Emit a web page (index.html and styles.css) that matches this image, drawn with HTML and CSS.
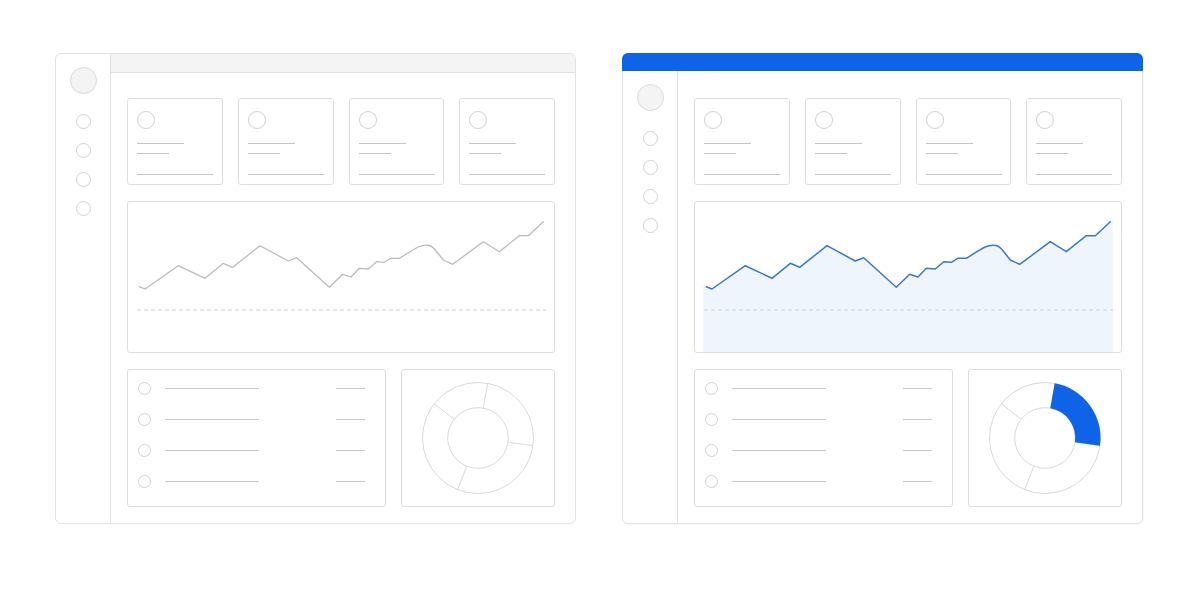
FILE: index.html
```html
<!DOCTYPE html>
<html>
<head>
<meta charset="utf-8">
<title>Dashboard wireframes</title>
<link rel="stylesheet" href="styles.css">
</head>
<body>
<div class="stage">
  <!-- Left window -->
  <div class="win">
    <div class="win-body">
      <aside class="sidebar">
        <span class="avatar"></span>
        <span class="nav-dot"></span>
        <span class="nav-dot"></span>
        <span class="nav-dot"></span>
        <span class="nav-dot"></span>
      </aside>
      <div class="main">
        <div class="topbar"></div>
        <div class="content">
          <div class="stats">
            <div class="card"><span class="card-icon"></span><span class="ln ln-a"></span><span class="ln ln-b"></span><span class="ln ln-c"></span></div>
            <div class="card"><span class="card-icon"></span><span class="ln ln-a"></span><span class="ln ln-b"></span><span class="ln ln-c"></span></div>
            <div class="card"><span class="card-icon"></span><span class="ln ln-a"></span><span class="ln ln-b"></span><span class="ln ln-c"></span></div>
            <div class="card"><span class="card-icon"></span><span class="ln ln-a"></span><span class="ln ln-b"></span><span class="ln ln-c"></span></div>
          </div>
          <div class="chart">
            <svg class="chart-svg" width="426" height="150" viewBox="0 0 426 150">
              <line class="baseline" x1="9" y1="108" x2="418" y2="108"/>
              <path class="trend" d="M11.3 84.7 L17 87 L50.3 63.7 L77 76.3 L95.3 61.3 L104.7 65.3 L132 43.7 L160.3 59 L168.7 55.7 L201.3 85.3 L214.7 72.3 L223 75 L231.3 66.3 L240.3 67 L248.7 59.7 L256.3 60.3 L262.7 56.3 L271.3 56.3 L282 49.7 L290 45 Q296 42.5 301 43.5 Q305 44.5 309 50 L315.3 58 L324.7 62.3 L355.3 39.7 L371.3 49.7 L391.3 33.7 L400.3 33.7 L415.3 19.7"/>
            </svg>
          </div>
          <div class="bottom">
            <div class="list">
              <div class="row"><span class="row-dot"></span><span class="row-line"></span><span class="row-val"></span></div>
              <div class="row"><span class="row-dot"></span><span class="row-line"></span><span class="row-val"></span></div>
              <div class="row"><span class="row-dot"></span><span class="row-line"></span><span class="row-val"></span></div>
              <div class="row"><span class="row-dot"></span><span class="row-line"></span><span class="row-val"></span></div>
            </div>
            <div class="donut">
              <svg width="152" height="136" viewBox="-76 -68 152 136">
                <circle class="ring" cx="0" cy="0" r="55.5"/>
                <circle class="ring" cx="0" cy="0" r="30.3"/>
                <line class="ring" x1="9.64" y1="-54.66" x2="5.26" y2="-29.84"/>
                <line class="ring" x1="54.96" y1="7.72" x2="30" y2="4.22"/>
                <line class="ring" x1="-20.43" y1="51.6" x2="-11.15" y2="28.17"/>
                <line class="ring" x1="-43.73" y1="-34.17" x2="-23.88" y2="-18.66"/>
              </svg>
            </div>
          </div>
        </div>
      </div>
    </div>
  </div>

  <!-- Right window -->
  <div class="win win--active">
    <div class="header"></div>
    <div class="win-body">
      <aside class="sidebar">
        <span class="avatar"></span>
        <span class="nav-dot"></span>
        <span class="nav-dot"></span>
        <span class="nav-dot"></span>
        <span class="nav-dot"></span>
      </aside>
      <div class="main">
        <div class="content">
          <div class="stats">
            <div class="card"><span class="card-icon"></span><span class="ln ln-a"></span><span class="ln ln-b"></span><span class="ln ln-c"></span></div>
            <div class="card"><span class="card-icon"></span><span class="ln ln-a"></span><span class="ln ln-b"></span><span class="ln ln-c"></span></div>
            <div class="card"><span class="card-icon"></span><span class="ln ln-a"></span><span class="ln ln-b"></span><span class="ln ln-c"></span></div>
            <div class="card"><span class="card-icon"></span><span class="ln ln-a"></span><span class="ln ln-b"></span><span class="ln ln-c"></span></div>
          </div>
          <div class="chart">
            <svg class="chart-svg" width="426" height="150" viewBox="0 0 426 150">
              <path class="area" d="M8 84.5 L11.3 84.7 L17 87 L50.3 63.7 L77 76.3 L95.3 61.3 L104.7 65.3 L132 43.7 L160.3 59 L168.7 55.7 L201.3 85.3 L214.7 72.3 L223 75 L231.3 66.3 L240.3 67 L248.7 59.7 L256.3 60.3 L262.7 56.3 L271.3 56.3 L282 49.7 L290 45 Q296 42.5 301 43.5 Q305 44.5 309 50 L315.3 58 L324.7 62.3 L355.3 39.7 L371.3 49.7 L391.3 33.7 L400.3 33.7 L415.3 19.7 L418 18 L418 150 L8 150 Z"/>
              <line class="baseline baseline--blue" x1="9" y1="108" x2="418" y2="108"/>
              <path class="trend trend--blue" d="M11.3 84.7 L17 87 L50.3 63.7 L77 76.3 L95.3 61.3 L104.7 65.3 L132 43.7 L160.3 59 L168.7 55.7 L201.3 85.3 L214.7 72.3 L223 75 L231.3 66.3 L240.3 67 L248.7 59.7 L256.3 60.3 L262.7 56.3 L271.3 56.3 L282 49.7 L290 45 Q296 42.5 301 43.5 Q305 44.5 309 50 L315.3 58 L324.7 62.3 L355.3 39.7 L371.3 49.7 L391.3 33.7 L400.3 33.7 L415.3 19.7"/>
            </svg>
          </div>
          <div class="bottom">
            <div class="list">
              <div class="row"><span class="row-dot"></span><span class="row-line"></span><span class="row-val"></span></div>
              <div class="row"><span class="row-dot"></span><span class="row-line"></span><span class="row-val"></span></div>
              <div class="row"><span class="row-dot"></span><span class="row-line"></span><span class="row-val"></span></div>
              <div class="row"><span class="row-dot"></span><span class="row-line"></span><span class="row-val"></span></div>
            </div>
            <div class="donut">
              <svg width="152" height="136" viewBox="-76 -68 152 136">
                <circle class="ring" cx="0" cy="0" r="55.5"/>
                <circle class="ring" cx="0" cy="0" r="30.3"/>
                <line class="ring" x1="54.96" y1="7.72" x2="30" y2="4.22"/>
                <line class="ring" x1="-20.43" y1="51.6" x2="-11.15" y2="28.17"/>
                <line class="ring" x1="-43.73" y1="-34.17" x2="-23.88" y2="-18.66"/>
                <path class="slice" d="M9.64 -54.66 A55.5 55.5 0 0 1 54.96 7.72 L30 4.22 A30.3 30.3 0 0 0 5.26 -29.84 Z"/>
              </svg>
            </div>
          </div>
        </div>
      </div>
    </div>
  </div>
</div>
</body>
</html>
```

FILE: styles.css
```css
html, body {
  margin: 0;
  padding: 0;
  background: #ffffff;
  font-family: "Liberation Sans", Arial, sans-serif;
}

.stage {
  width: 1200px;
  height: 600px;
  box-sizing: border-box;
  padding: 53px 0 0 55px;
  display: flex;
  gap: 46px;
  align-items: flex-start;
}

.win {
  width: 521px;
  height: 471px;
  box-sizing: border-box;
  border: 1px solid #e2e2e2;
  border-radius: 6px;
  display: flex;
  flex-direction: column;
  background: #fff;
}

.win--active {
  box-shadow: 1px 1px 1px rgba(0, 0, 0, 0.04);
}

.header {
  height: 18px;
  margin: -1px -1px 0 -1px;
  background: #0e63e6;
  border-radius: 6px 6px 0 0;
  flex: none;
}

.win-body {
  flex: 1;
  display: flex;
  min-height: 0;
}

.sidebar {
  width: 55px;
  box-sizing: border-box;
  border-right: 1px solid #e2e2e2;
  padding-top: 13px;
  display: flex;
  flex-direction: column;
  align-items: center;
  gap: 14px;
  flex: none;
}

.avatar {
  width: 27px;
  height: 27px;
  box-sizing: border-box;
  border: 1px solid #d9d9d9;
  background: #f4f4f4;
  border-radius: 50%;
  margin-bottom: 6px;
}

.nav-dot {
  width: 15px;
  height: 15px;
  box-sizing: border-box;
  border: 1px solid #d2d2d2;
  border-radius: 50%;
}

.main {
  flex: 1;
  display: flex;
  flex-direction: column;
  min-width: 0;
}

.topbar {
  height: 18px;
  background: #f4f4f4;
  border-bottom: 1px solid #e2e2e2;
  border-top-right-radius: 5px;
  flex: none;
}

.content {
  padding: 25px 20px 0 16px;
  display: flex;
  flex-direction: column;
  gap: 16px;
}

.win--active .content {
  padding-top: 27px;
}

.stats {
  display: grid;
  grid-template-columns: repeat(4, minmax(0, 1fr));
  gap: 15px;
}

.card {
  height: 87px;
  box-sizing: border-box;
  border: 1px solid #dedede;
  border-radius: 3px;
  padding: 12px 9px 0 9px;
  display: flex;
  flex-direction: column;
  align-items: flex-start;
}

.card-icon {
  width: 18px;
  height: 18px;
  box-sizing: border-box;
  border: 1px solid #cfcfcf;
  border-radius: 50%;
}

.ln {
  display: block;
  height: 1px;
  background: #c4c4c4;
}

.ln-a { width: 47px; margin-top: 14px; }
.ln-b { width: 32px; margin-top: 9px; }
.ln-c { width: 76px; margin-top: 20px; }

.chart {
  height: 152px;
  box-sizing: border-box;
  border: 1px solid #dedede;
  border-radius: 3px;
  overflow: hidden;
}

.chart-svg {
  display: block;
}

.baseline {
  stroke: #cfcfcf;
  stroke-width: 1;
  stroke-dasharray: 4 3;
}

.baseline--blue {
  stroke: #c9d3e0;
}

.trend {
  fill: none;
  stroke: #bcbcbc;
  stroke-width: 1.3;
  stroke-linejoin: round;
  stroke-linecap: round;
}

.trend--blue {
  stroke: #3b78c9;
  stroke-width: 1.5;
}

.area {
  fill: #eef5fd;
}

.bottom {
  display: flex;
  gap: 15px;
  height: 138px;
}

.list {
  width: 260px;
  box-sizing: border-box;
  border: 1px solid #dedede;
  border-radius: 3px;
  padding: 3px 20px 0 10px;
  display: flex;
  flex-direction: column;
}

.row {
  height: 31px;
  display: flex;
  align-items: center;
}

.row-dot {
  width: 13px;
  height: 13px;
  box-sizing: border-box;
  border: 1px solid #d0d0d0;
  border-radius: 50%;
  flex: none;
}

.row-line {
  width: 94px;
  height: 1px;
  background: #c8c8c8;
  margin-left: 14px;
}

.row-val {
  width: 29px;
  height: 1px;
  background: #c8c8c8;
  margin-left: auto;
}

.donut {
  flex: 1;
  box-sizing: border-box;
  border: 1px solid #dedede;
  border-radius: 3px;
  display: flex;
  align-items: center;
  justify-content: center;
}

.ring {
  fill: none;
  stroke: #d9d9d9;
  stroke-width: 1;
}

.slice {
  fill: #0e63e6;
}
```
